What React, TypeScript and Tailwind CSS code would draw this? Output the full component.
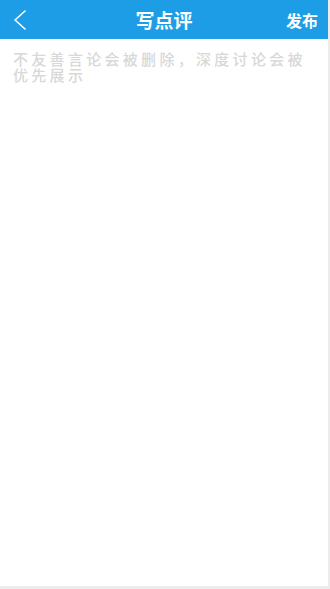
export default function App() {
  return (
    <div
      className="w-[330px] h-[589px] bg-[#ececec] overflow-hidden"
      style={{ fontFamily: '"Noto Sans CJK SC", "Noto Sans", sans-serif' }}
    >
      <div className="w-[328px] h-[586px] bg-white flex flex-col">
        {/* Header */}
        <div className="h-[39px] bg-[#1d9de6] flex items-center justify-between relative">
          <button className="w-[40px] h-full flex items-center pl-[13px]">
            <svg width="13" height="20" viewBox="0 0 13 20" fill="none">
              <path d="M12 1 L2 10 L12 19" stroke="white" strokeWidth="1.6" strokeLinecap="round" strokeLinejoin="round" />
            </svg>
          </button>
          <h1 className="absolute left-1/2 -translate-x-1/2 text-white text-[19px] font-bold leading-none">写点评</h1>
          <button className="text-white text-[16px] font-bold pr-[10px] leading-none">发布</button>
        </div>

        {/* Input */}
        <div className="flex-1 pl-[13px] pr-[15px] pt-[12px]">
          <textarea
            className="w-full h-full resize-none outline-none bg-transparent text-[15px] leading-[16px] tracking-[3.3px] font-medium text-[#555] placeholder:text-[#d8d8d8]"
            placeholder="不友善言论会被删除，深度讨论会被优先展示"
          />
        </div>
      </div>
    </div>
  );
}
